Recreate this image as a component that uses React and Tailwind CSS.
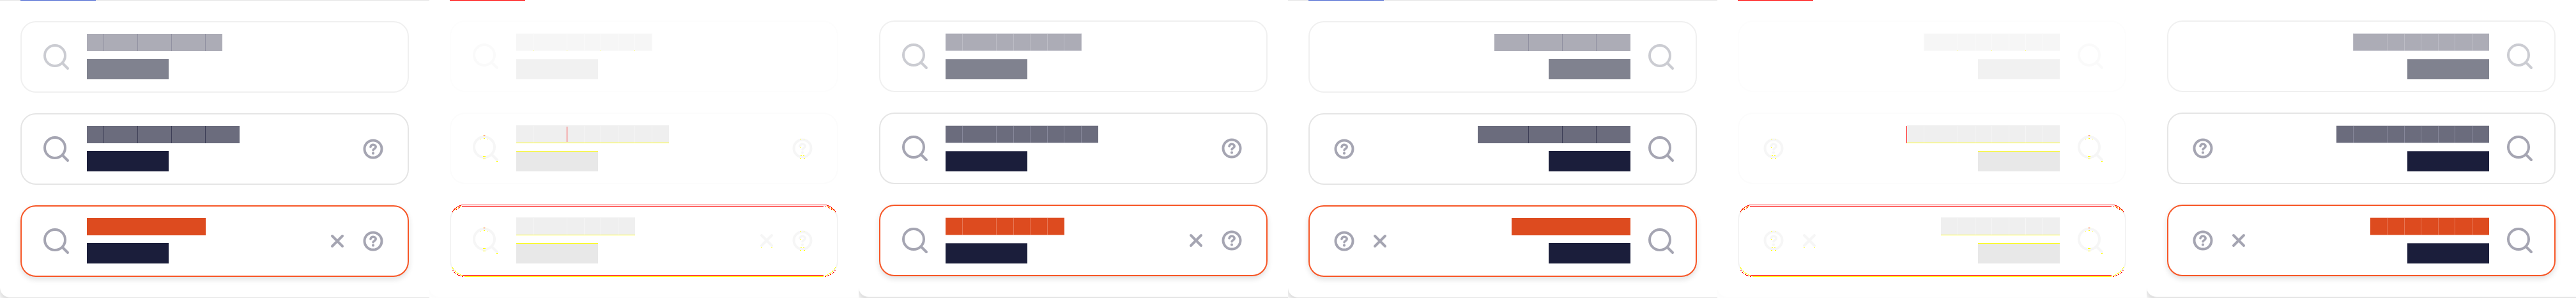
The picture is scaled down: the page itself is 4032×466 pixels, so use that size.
const ROWS = ["disabled", "idle", "active"];

const THEMES = {
  base: {
    disabled: { box: "border-[#f0f0f0]", icon: "#cbccd2", label: "bg-[#acacb6]", seam: "bg-[#9191a1]", value: "bg-[#80828f]", edge: "border-transparent" },
    idle: { box: "border-[#e5e5e5]", icon: "#a5a5b2", label: "bg-[#6b6c7d]", seam: "bg-[#3d3e56]", value: "bg-[#1b1e3b]", edge: "border-transparent" },
    active: { box: "border-[#f75626] shadow-[0_4px_8px_rgba(0,0,0,0.12)]", icon: "#a5a5b2", label: "bg-[#dd4b1f]", seam: "bg-[#dd4b1f]", value: "bg-[#1b1e3b]", edge: "border-transparent" },
  },
  diff: {
    disabled: { box: "border-[#fdfdfd]", icon: "#fafafa", label: "bg-[#f6f6f6]", seam: "bg-[#fafafa]", value: "bg-[#f1f1f1]", edge: "border-[#fbfbfb]", top: "border-[#f6f6f6]" },
    idle: { box: "border-[#fcfcfc]", icon: "#f6f6f6", label: "bg-[#efefef]", seam: "bg-[#f5f5f5]", value: "bg-[#e8e8e8]", edge: "border-[#efefef] border-b-[#ffff00]", top: "border-[#ffff00]" },
    active: { box: "border-x-[#f3f3f3] border-y-[#fefefe]", icon: "#f6f6f6", label: "bg-[#efefef]", seam: "bg-[#f6f6f6]", value: "bg-[#e8e8e8]", edge: "border-[#efefef] border-b-[#ffff00]", top: "border-[#ffff00]" },
  },
  next: {
    disabled: { box: "border-[#f0f0f0]", icon: "#cbccd2", label: "bg-[#acacb6]", seam: "bg-[#bcbcc5]", value: "bg-[#80828f]", edge: "border-[#dcdce2]", top: "border-[#a6a7b1]" },
    idle: { box: "border-[#e5e5e5]", icon: "#a5a5b2", label: "bg-[#6b6c7d]", seam: "bg-[#86879a]", value: "bg-[#1b1e3b]", edge: "border-[#cfcfd5]", top: "border-[#6b6c7f]" },
    active: { box: "border-[#f75626] shadow-[0_4px_8px_rgba(0,0,0,0.12)]", icon: "#a5a5b2", label: "bg-[#dd4b1f]", seam: "bg-[#e67655]", value: "bg-[#1b1e3b]", edge: "border-[#f3b8a4]", top: "border-[#6b6c7f]" },
  },
};

const WIDTH = {
  ltr: { disabled: 212, idle: 239, active: 186 },
  rtl: { disabled: 213, idle: 239, active: 186 },
};

/* Seam positions, measured from the side on which the line of text starts. */
const SEAMS = {
  base: {
    ltr: { disabled: [26, 79, 132, 185], idle: [26, 79, 132, 185], active: [] },
    rtl: { disabled: [53, 106, 159], idle: [53, 106, 159], active: [] },
  },
  fine: {
    ltr: { disabled: [26, 79, 106, 132, 159, 185, 212], idle: [26, 79, 106, 132, 159, 185, 212], active: [26, 79, 106, 132, 159] },
    rtl: { disabled: [26, 53, 79, 106, 132, 159, 212], idle: [26, 53, 79, 106, 132, 159, 212], active: [26, 53, 79, 106, 132, 159] },
  },
};

function SearchIcon({ color }) {
  return (
    <svg className="size-12 shrink-0" viewBox="0 0 48 48" fill="none" stroke={color} strokeWidth="4" strokeLinecap="round">
      <circle cx="22" cy="22" r="16" />
      <path d="M34 34L42 42" />
    </svg>
  );
}

function HelpIcon({ color }) {
  return (
    <svg className="size-8 shrink-0" viewBox="0 0 32 32" fill="none" stroke={color} strokeWidth="3.6" strokeLinecap="round" strokeLinejoin="round">
      <circle cx="16" cy="16" r="13.5" strokeWidth="4" />
      <path d="M12 12.6C12.5 10.4 14.2 9.2 16.1 9.2C18.5 9.2 20.2 10.8 20.2 12.8C20.2 15.6 16.4 15.6 16.1 17.6" />
      <circle cx="16" cy="22.7" r="2.1" fill={color} stroke="none" />
    </svg>
  );
}

function ClearIcon({ color }) {
  return (
    <svg className="size-8 shrink-0" viewBox="0 0 32 32" stroke={color} strokeWidth="4" strokeLinecap="round">
      <path d="M8 8L24 24M24 8L8 24" />
    </svg>
  );
}

function LabelBar({ kind, row, dir, theme }) {
  const crisp = kind === "base";
  const seams = SEAMS[crisp ? "base" : "fine"][dir][row];
  const width = !crisp && row === "disabled" ? 213 : WIDTH[dir][row];
  const stops = [...seams, width];
  return (
    <div
      className={`flex ${dir === "rtl" ? "flex-row-reverse" : ""} ${theme.label} ${theme.edge} ${crisp ? "h-[27px]" : "h-7 border-y"}`}
      style={{ width }}
    >
      {stops.map((stop, i) => {
        const start = i === 0 ? 0 : stops[i - 1] + 1;
        return (
          <div key={i} className={`flex shrink-0 ${dir === "rtl" ? "flex-row-reverse" : ""}`}>
            <div style={{ width: stop - start }} />
            {i < seams.length && <div className={`w-px ${theme.seam}`} />}
          </div>
        );
      })}
    </div>
  );
}

function Field({ kind, row, dir }) {
  const theme = THEMES[kind][row];
  const rtl = dir === "rtl";
  return (
    <div className={`flex h-28 items-center gap-6 rounded-[24px] border-2 bg-white ${theme.box} ${rtl ? "flex-row-reverse pr-[30px] pl-[38px]" : "pl-[30px] pr-[38px]"}`}>
      <SearchIcon color={theme.icon} />
      <div className={`flex flex-1 flex-col gap-3 self-start pt-[18px] ${rtl ? "items-end" : "items-start"}`}>
        <LabelBar kind={kind} row={row} dir={dir} theme={theme} />
        <div className={`h-8 w-32 ${theme.value} ${kind === "base" ? "" : `border-t ${theme.top}`}`} />
      </div>
      {row === "active" && <ClearIcon color={theme.icon} />}
      {row !== "disabled" && <HelpIcon color={theme.icon} />}
    </div>
  );
}

/* Changed pixels, laid over the faded drawing: red is a change, yellow is antialiasing. */
function ChangeMarks({ dir }) {
  const rtl = dir === "rtl";
  const s = rtl ? 582 : 86;
  const h = rtl ? 88 : 584;
  const c = rtl ? 144 : 528;
  const ticks = rtl ? [376, 429, 482] : [162, 215, 268, 321];
  return (
    <svg className="absolute inset-0 h-[466px] w-[672px]" viewBox="0 0 672 466" shapeRendering="crispEdges">
      <g fill="#ffff00">
        {ticks.map((x) => <rect key={x} x={x} y="79" width="1" height="1" />)}
        {[0, 144].map((dy) => (
          <g key={dy}>
            <rect x={s - 2} y={212 + dy} width="4" height="1" />
            <rect x={s - 1} y={216 + dy} width="2" height="1" />
            <rect x={s - 6} y={217 + dy} width="1" height="1" />
            <rect x={s + 5} y={217 + dy} width="1" height="1" />
            <rect x={s - 2} y={244 + dy} width="4" height="1" />
            <rect x={s - 2} y={248 + dy} width="4" height="1" />
            <rect x={s + 19} y={252 + dy} width="2" height="1" />
            <rect x={h - 4} y={217 + dy} width="2" height="1" />
            <rect x={h + 2} y={217 + dy} width="1" height="1" />
            <rect x={h - 4} y={230 + dy} width="1" height="1" />
            <rect x={h - 3} y={243 + dy} width="2" height="1" />
            <rect x={h + 1} y={243 + dy} width="2" height="1" />
            <rect x={h - 4} y={247 + dy} width="2" height="1" />
            <rect x={h + 2} y={247 + dy} width="2" height="1" />
            <rect x={s - 1} y={212 + dy} width="2" height="1" fill="#ff0000" />
          </g>
        ))}
        <rect x={c - 9} y="386" width="2" height="1" />
        <rect x={c + 7} y="386" width="2" height="1" />
      </g>
      {rtl ? (
        <rect x="296" y="197" width="1" height="27" fill="#ff0000" />
      ) : (
        <rect x="215" y="198" width="1" height="24" fill="#ff0000" />
      )}
      <g fill="#ff0000">
        <rect x="52" y="320" width="568" height="1" />
        <rect x="52" y="322" width="565" height="1" />
        <rect x="52" y="430" width="565" height="1" />
        <rect x="55" y="432" width="562" height="1" fill="#ffff00" />
      </g>
      <g fill="none" stroke="#ff0000">
        <path d="M35.5 332.5A24 24 0 0 1 52 320.5M636.5 332.5A24 24 0 0 0 620 320.5" />
        <path d="M36.5 422.5A24 24 0 0 0 54 432.5M635.5 422.5A24 24 0 0 1 618 432.5" strokeDasharray="2 1" />
        <path d="M42 327.5A24 24 0 0 1 52 322.5M630 327.5A24 24 0 0 0 620 322.5" strokeDasharray="1 1" />
      </g>
      <g fill="none" stroke="#ffff00" strokeDasharray="2 1">
        <path d="M36.5 332.5A22 22 0 0 1 50 322.5M635.5 332.5A22 22 0 0 0 622 322.5" />
        <path d="M36.5 418.5A24 24 0 0 0 52 430.5M635.5 418.5A24 24 0 0 1 620 430.5" />
      </g>
    </svg>
  );
}

const FRAME = {
  base: "pt-8 border-b border-[#e5e5e5] shadow-[0_4px_12px_rgba(0,0,0,0.2)]",
  diff: "pt-[31px] border-b-2 border-[#fdfdfd] shadow-[0_4px_12px_rgba(0,0,0,0.02)]",
  next: "pt-[31px] border-b-2 border-[#e5e5e5] shadow-[0_4px_12px_rgba(0,0,0,0.2)]",
};

function TabLine({ kind }) {
  return (
    <div className={`h-px w-full shrink-0 px-8 ${kind === "base" ? "bg-[#e5e5e5]" : "bg-white"}`}>
      {kind !== "next" && <div className={`h-px w-[118px] ${kind === "base" ? "bg-[#4d69d2]" : "bg-[#ff0000]"}`} />}
    </div>
  );
}

function Panel({ kind, dir }) {
  return (
    <section className="relative flex h-[466px] w-[672px] shrink-0 flex-col overflow-hidden bg-white">
      <div className="relative z-10">
        <TabLine kind={kind} />
      </div>
      <div className={`flex flex-1 flex-col gap-8 rounded-bl-[16px] bg-white px-8 ${FRAME[kind]}`}>
        {ROWS.map((row) => <Field key={row} kind={kind} row={row} dir={dir} />)}
      </div>
      {kind === "diff" && <ChangeMarks dir={dir} />}
    </section>
  );
}

export default function App() {
  return (
    <main className="flex h-[466px] w-[4032px] overflow-hidden bg-white">
      {["ltr", "rtl"].map((dir) =>
        ["base", "diff", "next"].map((kind) => <Panel key={dir + kind} kind={kind} dir={dir} />)
      )}
    </main>
  );
}
